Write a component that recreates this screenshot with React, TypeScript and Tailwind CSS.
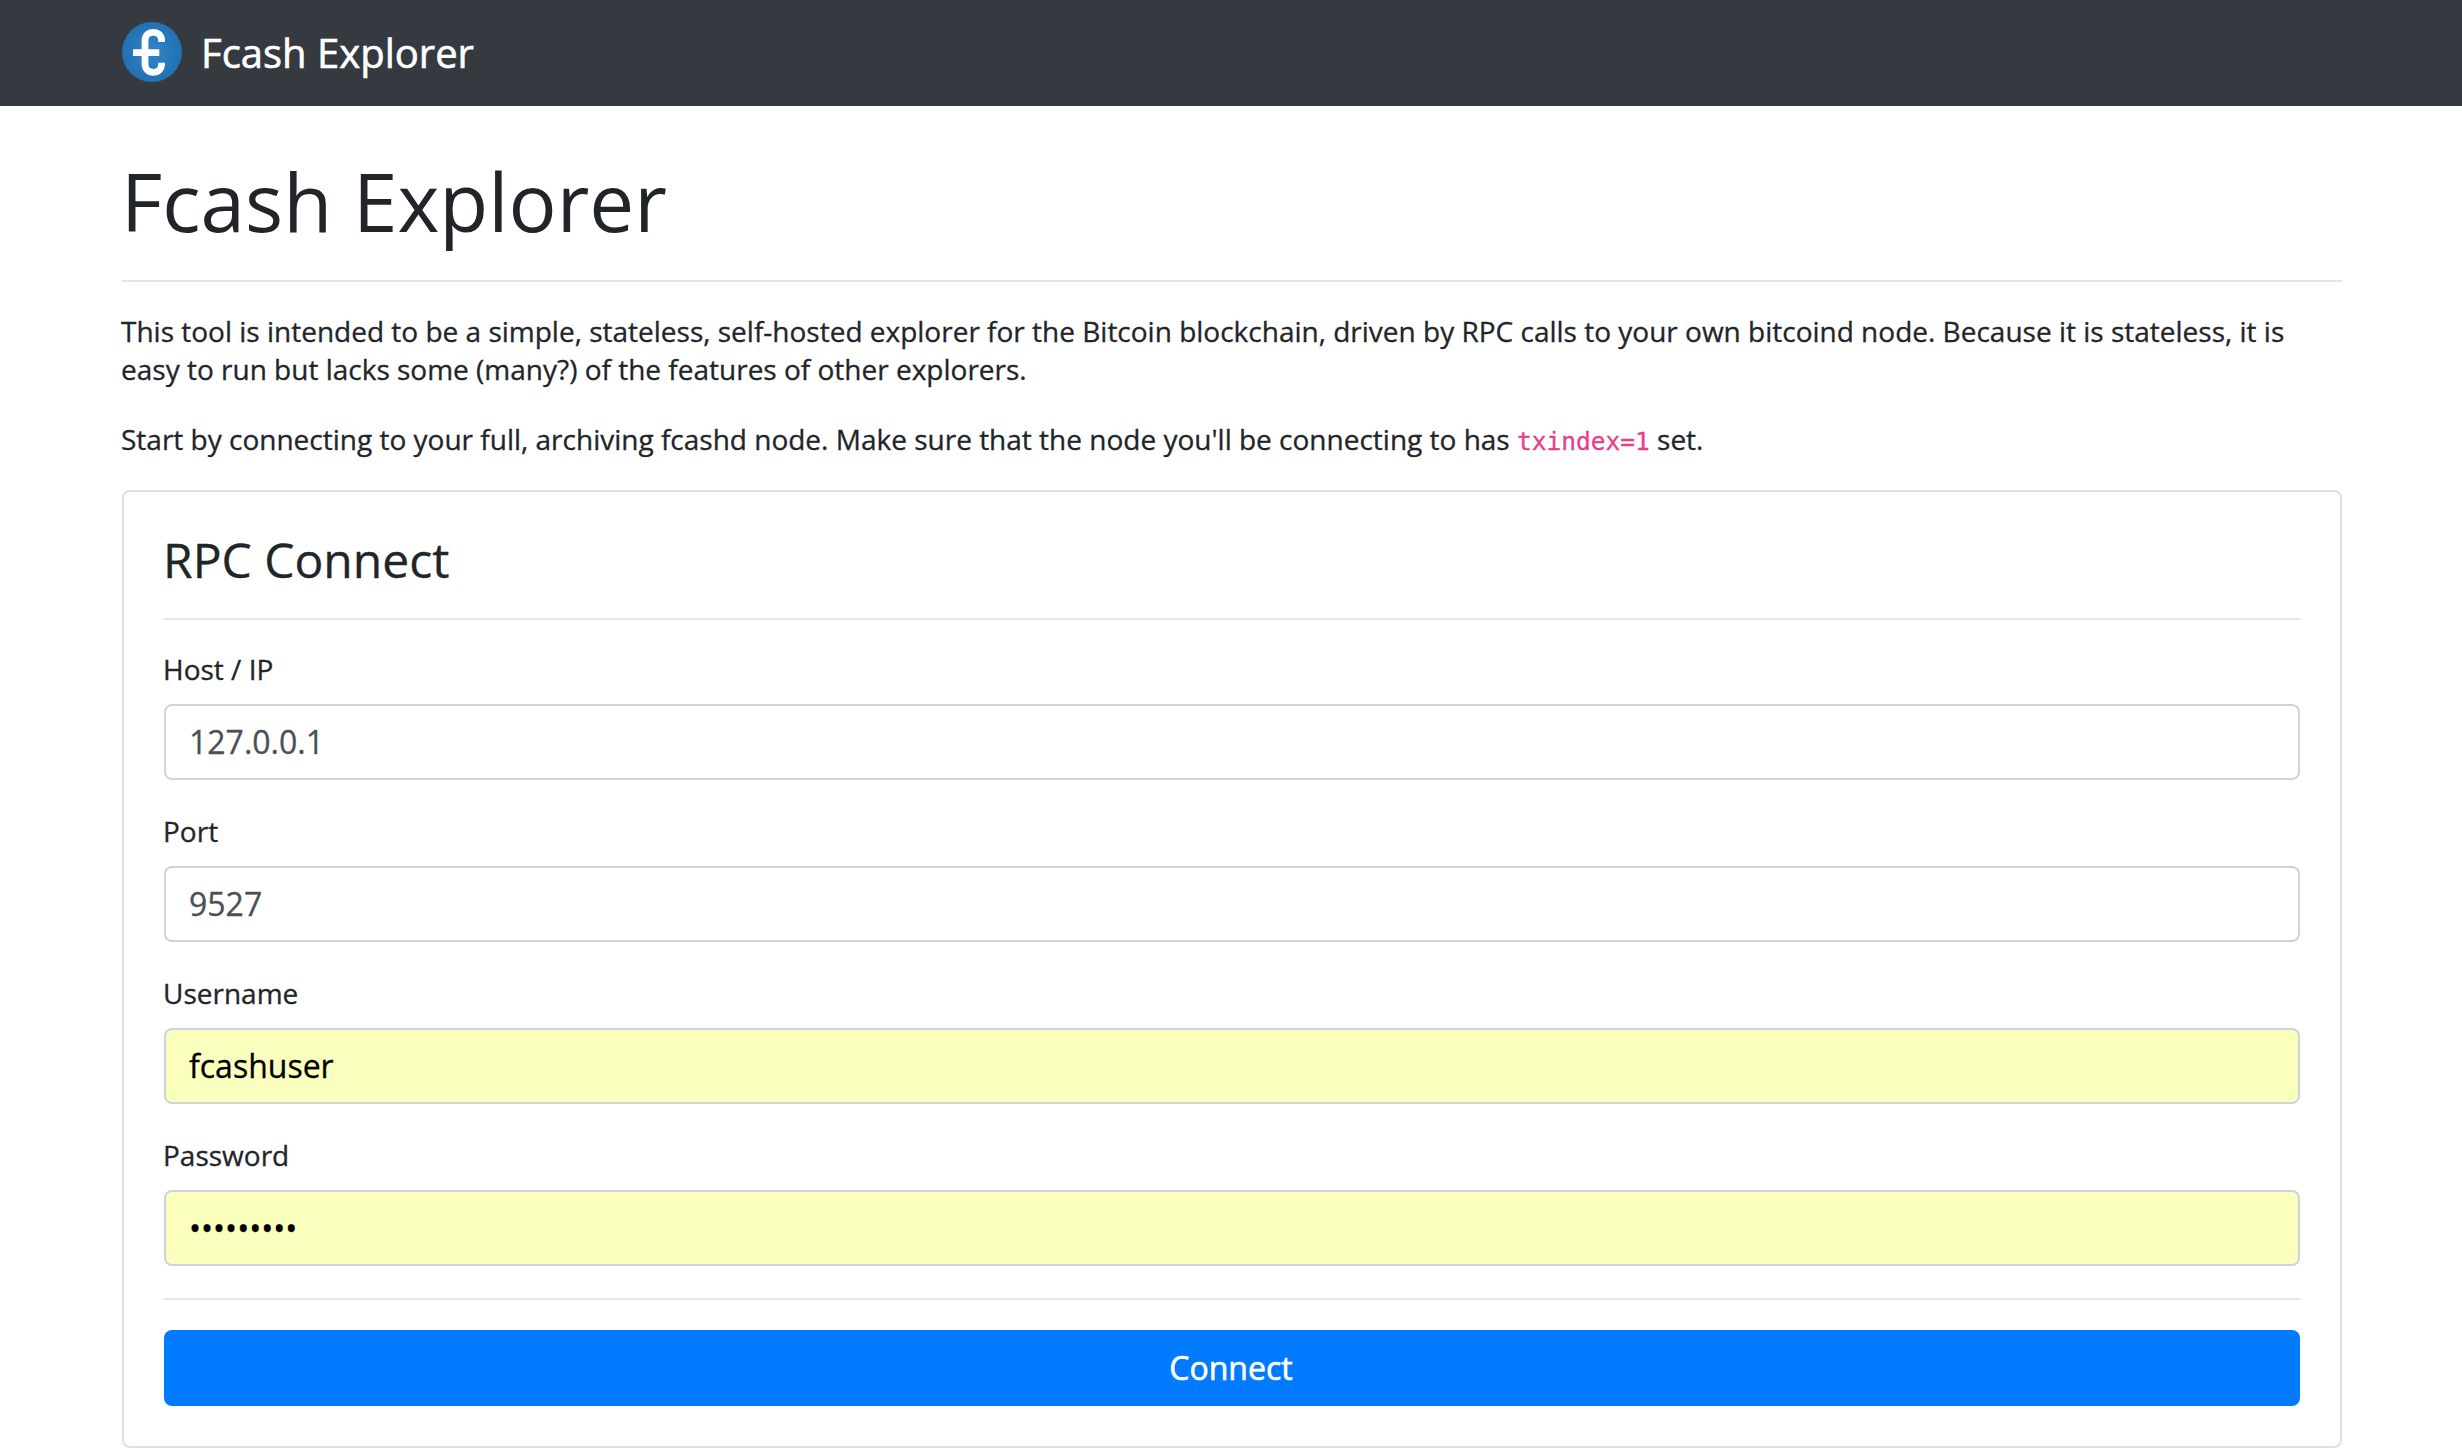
const fields = [
  { label: "Host / IP", value: "127.0.0.1", autofilled: false },
  { label: "Port", value: "9527", autofilled: false },
  { label: "Username", value: "fcashuser", autofilled: true },
  { label: "Password", value: "•••••••••", autofilled: true },
];

function Logo() {
  return (
    <svg className="size-[60px]" viewBox="0 0 60 60">
      <defs>
        <radialGradient id="disc">
          <stop offset="0" stopColor="#2f86cb" />
          <stop offset="1" stopColor="#2271b1" />
        </radialGradient>
      </defs>
      <circle cx="30" cy="30" r="30" fill="url(#disc)" />
      <path
        d="M39.6 20V18.6C39.6 13.5 36 10.4 31.3 10.4S23 13.5 23 18.6V42C23 47 26.6 50.3 31.3 50.3S39.6 47 39.6 42V40.7M11 30.7H37.3"
        fill="none"
        stroke="#fff"
        strokeWidth="6.8"
      />
    </svg>
  );
}

export default function App() {
  return (
    <div className="h-[1448px] overflow-hidden bg-white font-['Open_Sans',sans-serif] text-[28px] leading-[38px] text-[#212529] [-webkit-text-stroke:0.3px]">
      <header className="flex h-[106px] items-center bg-[#343a40] pb-0.5 pl-[122px] text-white [-webkit-text-stroke:0.6px]">
        <Logo />
        <span className="ml-[19px] pt-0.5 text-[40px]">Fcash Explorer</span>
      </header>
      <main className="pr-[120px] pl-[122px]">
        <h1 className="mt-[47px] -ml-px text-[80px] leading-[96px] [-webkit-text-stroke:0px]">Fcash Explorer</h1>
        <hr className="mt-[31px] border-t-2 border-[#e5e5e5]" />
        <p className="mt-[30px] -ml-px">
          This tool is intended to be a simple, stateless, self-hosted explorer for the Bitcoin blockchain, driven by RPC calls to your own bitcoind node. Because it is stateless, it is
          <br />
          easy to run but lacks some (many?) of the features of other explorers.
        </p>
        <p className="mt-8 -ml-px h-[38px]">
          Start by connecting to your full, archiving fcashd node. Make sure that the node you'll be connecting to has{" "}
          <code className="font-['DejaVu_Sans_Mono',monospace] text-[24.5px] leading-none text-[#e83e8c]">txindex=1</code> set.
        </p>
        <section className="mt-8 rounded-lg border-2 border-[#dfdfdf] p-10">
          <h2 className="-ml-px pt-px text-5xl leading-[54px]">RPC Connect</h2>
          <hr className="mt-[31px] mb-[30px] border-t-2 border-[#e5e5e5]" />
          <form className="flex flex-col gap-8">
            {fields.map((f) => (
              <label key={f.label} className="block">
                <span className="-ml-px block">{f.label}</span>
                <input
                  type="text"
                  readOnly
                  value={f.value}
                  className={
                    f.autofilled
                      ? "mt-4 block h-[76px] w-full rounded-lg border-2 border-[#ced4da] bg-[#faffbd] px-[23px] pb-0.5 text-[32px] text-black outline-none"
                      : "mt-4 block h-[76px] w-full rounded-lg border-2 border-[#ced4da] bg-white px-[23px] pb-0.5 text-[32px] text-[#495057] outline-none"
                  }
                />
              </label>
            ))}
          </form>
          <hr className="mt-8 border-t-2 border-[#e5e5e5]" />
          <button type="button" className="mt-[30px] block h-[76px] w-full rounded-lg bg-[#007bff] pr-0.5 text-[32px] text-white [-webkit-text-stroke:0.6px]">
            Connect
          </button>
        </section>
      </main>
    </div>
  );
}
